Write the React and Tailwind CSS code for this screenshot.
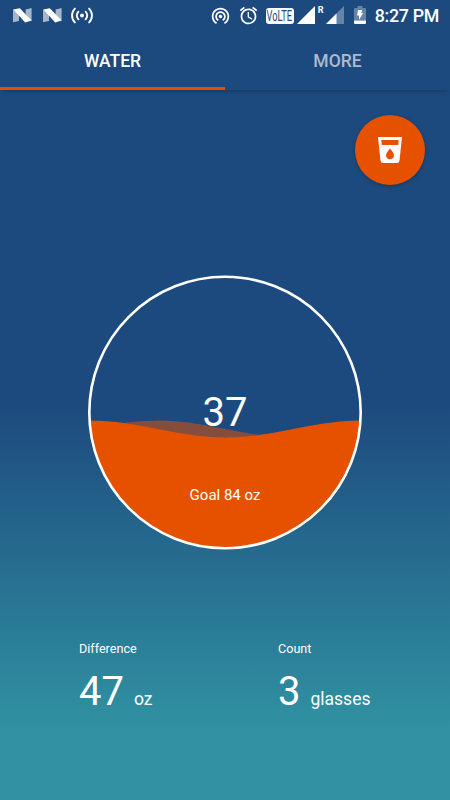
const SIZE = 274;
const WAVE_LENGTH = 271;

// water level inside the gauge, one full sine period across the circle
function wavePath(shift) {
  const points = [];
  for (let x = 0; x <= SIZE; x += 2) {
    const y = 153 - 8.4 * Math.cos((2 * Math.PI * (x - 2 - shift)) / WAVE_LENGTH);
    points.push(`${x} ${y.toFixed(2)}`);
  }
  return `M${points.join("L")}L${SIZE} ${SIZE}L0 ${SIZE}Z`;
}

function NougatIcon({ className = "" }) {
  return (
    <svg viewBox="0 0 19 15" className={`w-[19px] h-[15px] ${className}`}>
      <path d="M0 1.500 6 5v8L0 14.300Z" fill="#fff" opacity=".6" />
      <path d="M12.600 1.600 18.600 0v13L12.600 9Z" fill="#fff" opacity=".6" />
      <path d="M.3 1.500 6.800.2 18.600 12.600l-6.400 1.900Z" fill="#fff" />
    </svg>
  );
}

function BroadcastIcon() {
  return (
    <svg viewBox="0 0 22 17" className="w-[22px] h-[17px] ml-[9px]" fill="none" stroke="#fff" strokeWidth="1.9" strokeLinecap="round">
      <circle cx="11" cy="8.5" r="2" fill="#fff" stroke="none" />
      <path d="M7.4 4.7a5.4 5.4 0 0 0 0 7.6M14.6 4.7a5.4 5.4 0 0 1 0 7.6M3.9 1.6a9.8 9.8 0 0 0 0 13.8M18.1 1.6a9.8 9.8 0 0 1 0 13.8" />
    </svg>
  );
}

function HotspotIcon() {
  return (
    <svg viewBox="0 0 24 24" className="w-[21px] h-[21px] -mt-px" fill="#fff">
      <path d="M12 11c-1.1 0-2 .9-2 2s.9 2 2 2 2-.9 2-2-.9-2-2-2zm6 2c0-3.31-2.69-6-6-6s-6 2.69-6 6c0 2.22 1.21 4.15 3 5.19l1-1.74c-1.19-.7-2-1.97-2-3.45 0-2.21 1.79-4 4-4s4 1.79 4 4c0 1.48-.81 2.75-2 3.45l1 1.74c1.79-1.04 3-2.97 3-5.19zM12 3C6.48 3 2 7.48 2 13c0 3.7 2.01 6.92 4.99 8.65l1-1.73C5.61 18.53 4 15.96 4 13c0-4.42 3.58-8 8-8s8 3.58 8 8c0 2.96-1.61 5.53-4 6.92l1 1.73c2.99-1.73 5-4.95 5-8.65 0-5.52-4.48-10-10-10z" />
    </svg>
  );
}

function AlarmIcon() {
  return (
    <svg viewBox="0 0 24 24" className="w-[21px] h-[21px] ml-[7px] -mt-px" fill="#fff">
      <path d="M22 5.72l-4.6-3.86-1.29 1.53 4.6 3.86L22 5.72zM7.88 3.39L6.6 1.86 2 5.71l1.29 1.53 4.59-3.85zM12.5 8H11v6l4.75 2.85.75-1.23-4-2.37V8zM12 4c-4.97 0-9 4.03-9 9s4.02 9 9 9c4.97 0 9-4.03 9-9s-4.03-9-9-9zm0 16c-3.87 0-7-3.13-7-7s3.13-7 7-7 7 3.13 7 7-3.13 7-7 7z" />
    </svg>
  );
}

function BatteryIcon() {
  return (
    <svg viewBox="0 0 12 18" className="w-3 h-[18px] ml-[10px] -mt-px">
      <path d="M3.500 0h5v2H11q1 0 1 1v11.500H0V3q0-1 1-1h2.500Z" fill="#fff" opacity=".32" />
      <path d="M0 14.500h12V17q0 1-1 1H1q-1 0-1-1Z" fill="#fff" />
      <path d="M4 4h4.200L7.300 7H9.200L5 13.800V9.500H3Z" fill="#fff" />
    </svg>
  );
}

function StatusBar() {
  return (
    <div className="flex h-[31px] items-center pl-[13px] pr-[11px]">
      <NougatIcon />
      <NougatIcon className="ml-[11px]" />
      <BroadcastIcon />
      <div className="ml-auto flex items-center">
        <HotspotIcon />
        <AlarmIcon />
        <div className="ml-[7px] flex h-4 w-7 items-center justify-center rounded-[3px] bg-white text-[#1d4a7e]">
          <span className="scale-x-[0.66] text-[14px] leading-4">VoLTE</span>
        </div>
        <svg viewBox="0 0 18 18" className="ml-[3px] -mt-px h-[18px] w-[18px]">
          <path d="M18 0v18H0Z" fill="#fff" />
        </svg>
        <span className="ml-[3px] -mt-[10px] w-[6px] text-[9px] leading-none font-bold">R</span>
        <svg viewBox="0 0 18 18" className="ml-[2px] -mt-px h-[18px] w-[18px]">
          <path d="M18 0v18H0Z" fill="#fff" opacity=".32" />
          <path d="M10.500 7.500V18H0Z" fill="#fff" />
        </svg>
        <BatteryIcon />
        <span className="ml-[9px] text-[17.800px] leading-none font-medium tracking-[-0.3px] whitespace-nowrap">8:27 PM</span>
      </div>
    </div>
  );
}

function Tabs() {
  return (
    <div className="grid h-[59px] grid-cols-2 text-center text-[17.500px] leading-[60px] font-medium shadow-[0_3px_4px_-2px_rgba(0,0,0,0.25)]">
      <div className="h-[59px] border-b-[3px] border-[#e65100]">WATER</div>
      <div className="text-[#adbbcf]">MORE</div>
    </div>
  );
}

function Gauge() {
  return (
    <div className="relative mx-auto mt-[91px] h-[274px] w-[274px]">
      <svg viewBox="0 0 274 274" className="block h-full w-full overflow-visible">
        <defs>
          <clipPath id="bowl">
            <circle cx="137" cy="136.500" r="135.500" />
          </clipPath>
        </defs>
        <g clipPath="url(#bowl)">
          <rect width="274" height="274" fill="#1d4a7e" />
          <path d={wavePath(67.75)} fill="#e65100" opacity=".52" />
          <path d={wavePath(0)} fill="#e65100" />
        </g>
        <circle cx="137" cy="136.500" r="135.700" fill="none" stroke="#fff" strokeWidth="2.600" />
      </svg>
      <div className="absolute inset-x-0 top-[117px] text-center text-[40px] leading-[40px]">37</div>
      <div className="absolute inset-x-0 top-[209px] text-center text-[15px] leading-[20px]">Goal 84 oz</div>
    </div>
  );
}

function Stat({ label, value, unit, className }) {
  return (
    <div className={className}>
      <div className="text-[12.600px] leading-4">{label}</div>
      <div className="mt-[13px] flex items-baseline leading-[44px]">
        <span className="text-[40px]">{value}</span>
        <span className="ml-[10px] text-[17.500px]">{unit}</span>
      </div>
    </div>
  );
}

export default function App() {
  return (
    <div className="h-[800px] w-[450px] overflow-hidden bg-[linear-gradient(to_bottom,#1d4a7e_0px,#1d4a7e_405px,#3092a2_730px)] font-['Roboto',sans-serif] text-white">
      <StatusBar />
      <Tabs />
      <div className="mt-[25px] mr-[25px] ml-auto flex h-[70px] w-[70px] items-center justify-center rounded-full bg-[#e65100] shadow-[0_1px_4px_rgba(0,0,0,0.25)]">
        <svg viewBox="0 0 24 26" className="h-[26px] w-6">
          <path fillRule="evenodd" fill="#fff" d="M0 0h24l-2.500 23.500Q21.200 26 18.800 26H5.200Q2.800 26 2.500 23.500ZM3.300 3l.5 5h16.400l.5-5ZM12 22.300c2.300 0 4-1.600 4-3.900 0-2.700-4-7-4-7s-4 4.300-4 7c0 2.300 1.700 3.900 4 3.900Z" />
        </svg>
      </div>
      <Gauge />
      <div className="mt-[91px] flex">
        <Stat className="ml-[79px] w-[199px]" label="Difference" value="47" unit="oz" />
        <Stat label="Count" value="3" unit="glasses" />
      </div>
    </div>
  );
}
